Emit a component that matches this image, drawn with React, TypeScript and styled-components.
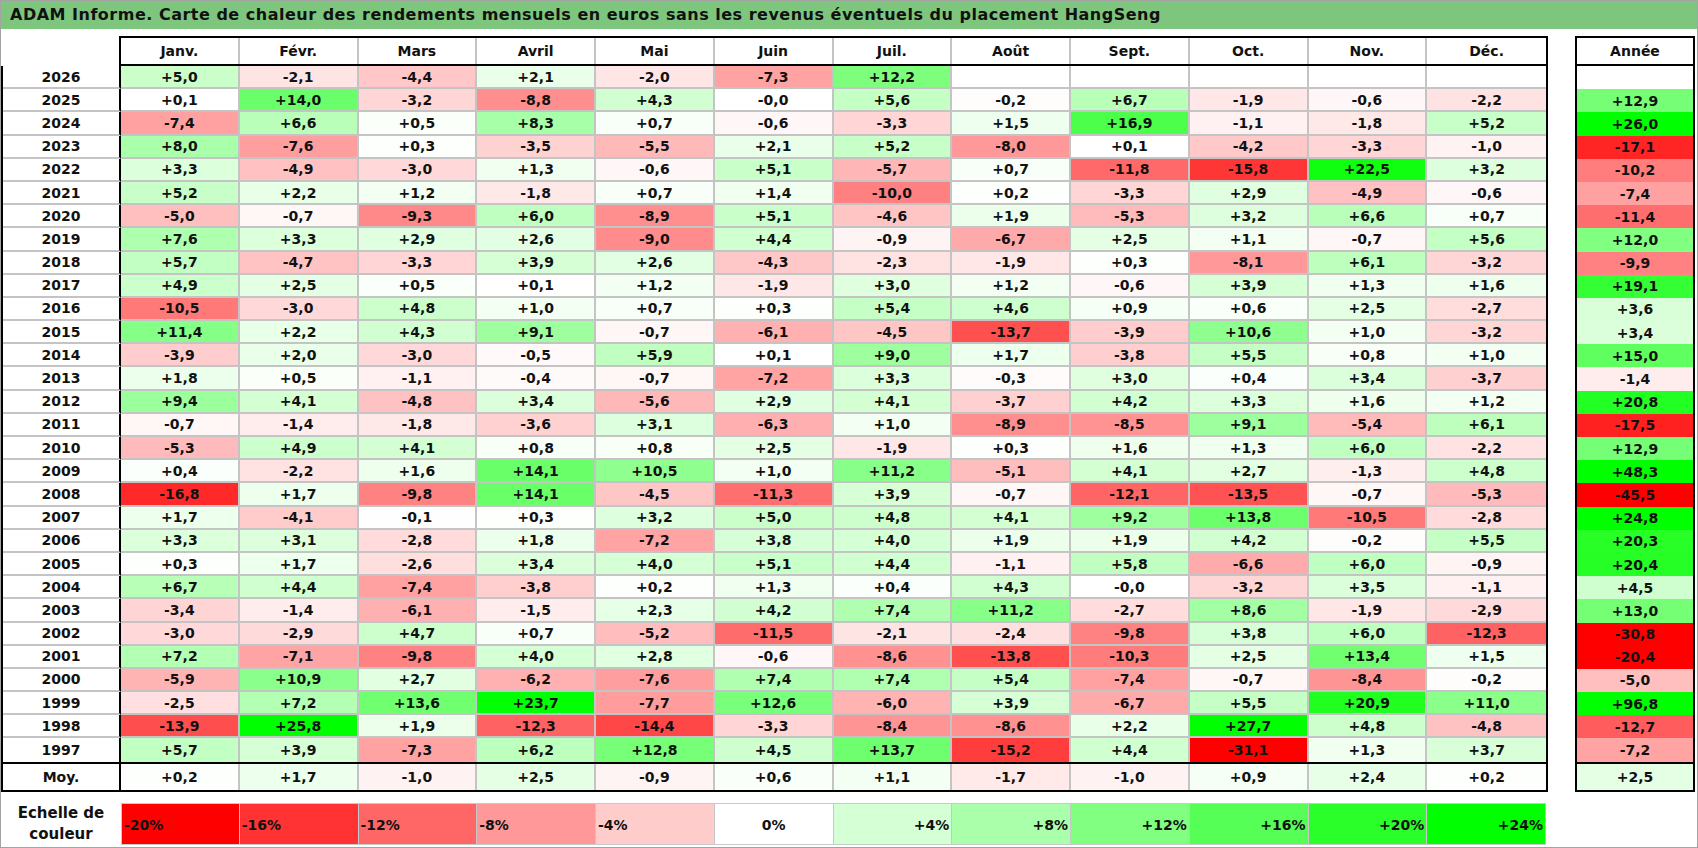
import React from 'react';
import styled, { createGlobalStyle } from 'styled-components';

const GlobalStyle = createGlobalStyle`
  body {
    margin: 0;
    background: #ffffff;
    font-family: "DejaVu Sans", "Liberation Sans", sans-serif;
  }
`;

const MONTHS = ['Janv.', 'Févr.', 'Mars', 'Avril', 'Mai', 'Juin', 'Juil.', 'Août', 'Sept.', 'Oct.', 'Nov.', 'Déc.'];

// year, 12 months, year total ('' = no value yet)
const ROWS: [string, string[], string][] = [
  ['2026', ['+5,0', '-2,1', '-4,4', '+2,1', '-2,0', '-7,3', '+12,2', '', '', '', '', ''], ''],
  ['2025', ['+0,1', '+14,0', '-3,2', '-8,8', '+4,3', '-0,0', '+5,6', '-0,2', '+6,7', '-1,9', '-0,6', '-2,2'], '+12,9'],
  ['2024', ['-7,4', '+6,6', '+0,5', '+8,3', '+0,7', '-0,6', '-3,3', '+1,5', '+16,9', '-1,1', '-1,8', '+5,2'], '+26,0'],
  ['2023', ['+8,0', '-7,6', '+0,3', '-3,5', '-5,5', '+2,1', '+5,2', '-8,0', '+0,1', '-4,2', '-3,3', '-1,0'], '-17,1'],
  ['2022', ['+3,3', '-4,9', '-3,0', '+1,3', '-0,6', '+5,1', '-5,7', '+0,7', '-11,8', '-15,8', '+22,5', '+3,2'], '-10,2'],
  ['2021', ['+5,2', '+2,2', '+1,2', '-1,8', '+0,7', '+1,4', '-10,0', '+0,2', '-3,3', '+2,9', '-4,9', '-0,6'], '-7,4'],
  ['2020', ['-5,0', '-0,7', '-9,3', '+6,0', '-8,9', '+5,1', '-4,6', '+1,9', '-5,3', '+3,2', '+6,6', '+0,7'], '-11,4'],
  ['2019', ['+7,6', '+3,3', '+2,9', '+2,6', '-9,0', '+4,4', '-0,9', '-6,7', '+2,5', '+1,1', '-0,7', '+5,6'], '+12,0'],
  ['2018', ['+5,7', '-4,7', '-3,3', '+3,9', '+2,6', '-4,3', '-2,3', '-1,9', '+0,3', '-8,1', '+6,1', '-3,2'], '-9,9'],
  ['2017', ['+4,9', '+2,5', '+0,5', '+0,1', '+1,2', '-1,9', '+3,0', '+1,2', '-0,6', '+3,9', '+1,3', '+1,6'], '+19,1'],
  ['2016', ['-10,5', '-3,0', '+4,8', '+1,0', '+0,7', '+0,3', '+5,4', '+4,6', '+0,9', '+0,6', '+2,5', '-2,7'], '+3,6'],
  ['2015', ['+11,4', '+2,2', '+4,3', '+9,1', '-0,7', '-6,1', '-4,5', '-13,7', '-3,9', '+10,6', '+1,0', '-3,2'], '+3,4'],
  ['2014', ['-3,9', '+2,0', '-3,0', '-0,5', '+5,9', '+0,1', '+9,0', '+1,7', '-3,8', '+5,5', '+0,8', '+1,0'], '+15,0'],
  ['2013', ['+1,8', '+0,5', '-1,1', '-0,4', '-0,7', '-7,2', '+3,3', '-0,3', '+3,0', '+0,4', '+3,4', '-3,7'], '-1,4'],
  ['2012', ['+9,4', '+4,1', '-4,8', '+3,4', '-5,6', '+2,9', '+4,1', '-3,7', '+4,2', '+3,3', '+1,6', '+1,2'], '+20,8'],
  ['2011', ['-0,7', '-1,4', '-1,8', '-3,6', '+3,1', '-6,3', '+1,0', '-8,9', '-8,5', '+9,1', '-5,4', '+6,1'], '-17,5'],
  ['2010', ['-5,3', '+4,9', '+4,1', '+0,8', '+0,8', '+2,5', '-1,9', '+0,3', '+1,6', '+1,3', '+6,0', '-2,2'], '+12,9'],
  ['2009', ['+0,4', '-2,2', '+1,6', '+14,1', '+10,5', '+1,0', '+11,2', '-5,1', '+4,1', '+2,7', '-1,3', '+4,8'], '+48,3'],
  ['2008', ['-16,8', '+1,7', '-9,8', '+14,1', '-4,5', '-11,3', '+3,9', '-0,7', '-12,1', '-13,5', '-0,7', '-5,3'], '-45,5'],
  ['2007', ['+1,7', '-4,1', '-0,1', '+0,3', '+3,2', '+5,0', '+4,8', '+4,1', '+9,2', '+13,8', '-10,5', '-2,8'], '+24,8'],
  ['2006', ['+3,3', '+3,1', '-2,8', '+1,8', '-7,2', '+3,8', '+4,0', '+1,9', '+1,9', '+4,2', '-0,2', '+5,5'], '+20,3'],
  ['2005', ['+0,3', '+1,7', '-2,6', '+3,4', '+4,0', '+5,1', '+4,4', '-1,1', '+5,8', '-6,6', '+6,0', '-0,9'], '+20,4'],
  ['2004', ['+6,7', '+4,4', '-7,4', '-3,8', '+0,2', '+1,3', '+0,4', '+4,3', '-0,0', '-3,2', '+3,5', '-1,1'], '+4,5'],
  ['2003', ['-3,4', '-1,4', '-6,1', '-1,5', '+2,3', '+4,2', '+7,4', '+11,2', '-2,7', '+8,6', '-1,9', '-2,9'], '+13,0'],
  ['2002', ['-3,0', '-2,9', '+4,7', '+0,7', '-5,2', '-11,5', '-2,1', '-2,4', '-9,8', '+3,8', '+6,0', '-12,3'], '-30,8'],
  ['2001', ['+7,2', '-7,1', '-9,8', '+4,0', '+2,8', '-0,6', '-8,6', '-13,8', '-10,3', '+2,5', '+13,4', '+1,5'], '-20,4'],
  ['2000', ['-5,9', '+10,9', '+2,7', '-6,2', '-7,6', '+7,4', '+7,4', '+5,4', '-7,4', '-0,7', '-8,4', '-0,2'], '-5,0'],
  ['1999', ['-2,5', '+7,2', '+13,6', '+23,7', '-7,7', '+12,6', '-6,0', '+3,9', '-6,7', '+5,5', '+20,9', '+11,0'], '+96,8'],
  ['1998', ['-13,9', '+25,8', '+1,9', '-12,3', '-14,4', '-3,3', '-8,4', '-8,6', '+2,2', '+27,7', '+4,8', '-4,8'], '-12,7'],
  ['1997', ['+5,7', '+3,9', '-7,3', '+6,2', '+12,8', '+4,5', '+13,7', '-15,2', '+4,4', '-31,1', '+1,3', '+3,7'], '-7,2'],
];

const AVERAGES = ['+0,2', '+1,7', '-1,0', '+2,5', '-0,9', '+0,6', '+1,1', '-1,7', '-1,0', '+0,9', '+2,4', '+0,2'];
const AVERAGE_YEAR = '+2,5';

const SCALE = [-20, -16, -12, -8, -4, 0, 4, 8, 12, 16, 20, 24];

// red saturates at -20 %, green at +24 %
function heat(text: string): string {
  if (!text) return '#ffffff';
  const v = parseFloat(text.replace(',', '.'));
  if (v >= 0) {
    const c = Math.round(255 * (1 - Math.min(v / 24, 1)));
    return `rgb(${c},255,${c})`;
  }
  const c = Math.round(255 * (1 - Math.min(-v / 20, 1)));
  return `rgb(255,${c},${c})`;
}

const Page = styled.div`
  width: 1698px;
  height: 848px;
  box-sizing: border-box;
  border: 1px solid #a3a3a3;
  background: #ffffff;
  overflow: hidden;
  color: #111111;
  font-weight: 700;
`;

const TitleBar = styled.div`
  height: 28px;
  background: #7ec67e;
  padding-left: 9px;
  font-size: 16px;
  letter-spacing: 0.5px;
  line-height: 28px;
  white-space: nowrap;
`;

const Tables = styled.div`
  display: flex;
  align-items: flex-start;
  gap: 27px;
  padding-top: 7px;
`;

const MainTable = styled.div`
  width: 1547px;
  display: flex;
  flex-direction: column;
`;

const HeaderRow = styled.div`
  display: flex;
  height: 30px;
`;

const Corner = styled.div`
  width: 118px;
  flex: none;
`;

const HeaderBand = styled.div`
  flex: 1;
  display: grid;
  grid-template-columns: repeat(12, 1fr);
  box-sizing: border-box;
  border: 2px solid #000;
`;

const HeadCell = styled.div`
  display: flex;
  align-items: center;
  justify-content: center;
  font-size: 14px;
  border-right: 2px solid #c4c4c4;

  &:last-child {
    border-right: none;
  }
`;

const Body = styled.div`
  box-sizing: border-box;
  border: 2px solid #000;
  border-top: none;
`;

const Row = styled.div<{ $avg?: boolean }>`
  display: grid;
  grid-template-columns: 118px repeat(12, 1fr);
  height: ${p => (p.$avg ? '28px' : '23.2px')};
  box-sizing: border-box;
  border-top: ${p => (p.$avg ? '2px solid #000' : 'none')};
`;

const YearCell = styled.div<{ $last?: boolean }>`
  display: flex;
  align-items: center;
  justify-content: center;
  box-sizing: border-box;
  font-size: 14px;
  border-right: 2px solid #000;
  border-bottom: ${p => (p.$last ? 'none' : '2px solid #c4c4c4')};
`;

const Cell = styled.div<{ $bg: string; $last?: boolean }>`
  display: flex;
  align-items: center;
  justify-content: center;
  box-sizing: border-box;
  background: ${p => p.$bg};
  font-size: 14px;
  border-right: 2px solid #c4c4c4;
  border-bottom: ${p => (p.$last ? 'none' : '2px solid #c4c4c4')};

  &:last-child {
    border-right: none;
  }
`;

const YearTable = styled.div`
  width: 120px;
  display: flex;
  flex-direction: column;
`;

const YearHead = styled.div`
  height: 30px;
  box-sizing: border-box;
  border: 2px solid #000;
  display: flex;
  align-items: center;
  justify-content: center;
  font-size: 14px;
`;

const TotalCell = styled.div<{ $bg: string; $avg?: boolean }>`
  height: ${p => (p.$avg ? '28px' : '23.2px')};
  box-sizing: border-box;
  background: ${p => p.$bg};
  border-top: ${p => (p.$avg ? '2px solid #000' : 'none')};
  display: flex;
  align-items: center;
  justify-content: center;
  font-size: 14px;
`;

const Legend = styled.div`
  display: grid;
  grid-template-columns: 120px repeat(12, 1fr);
  width: 1545px;
  height: 42px;
  margin-top: 11px;
`;

const LegendLabel = styled.div`
  display: flex;
  align-items: center;
  justify-content: center;
  text-align: center;
  font-size: 15px;
  line-height: 21px;
`;

const Swatch = styled.div<{ $bg: string; $align: string }>`
  display: flex;
  align-items: center;
  justify-content: ${p => p.$align};
  padding: 3px 2px 0;
  box-sizing: border-box;
  background: ${p => p.$bg};
  border: 1px solid #c8c8c8;
  border-left: none;
  font-size: 14px;

  &:nth-child(2) {
    border-left: 1px solid #c8c8c8;
  }
`;

function swatchText(v: number): string {
  if (v > 0) return `+${v}%`;
  return `${v}%`;
}

export default function App() {
  return (
    <>
      <GlobalStyle />
      <Page>
        <TitleBar>
          ADAM Informe. Carte de chaleur des rendements mensuels en euros sans les revenus éventuels du placement HangSeng
        </TitleBar>
        <Tables>
          <MainTable>
            <HeaderRow>
              <Corner />
              <HeaderBand>
                {MONTHS.map(m => (
                  <HeadCell key={m}>{m}</HeadCell>
                ))}
              </HeaderBand>
            </HeaderRow>
            <Body>
              {ROWS.map(([year, values], i) => {
                const last = i === ROWS.length - 1;
                return (
                  <Row key={year}>
                    <YearCell $last={last}>{year}</YearCell>
                    {values.map((v, j) => (
                      <Cell key={j} $bg={heat(v)} $last={last}>
                        {v}
                      </Cell>
                    ))}
                  </Row>
                );
              })}
              <Row $avg>
                <YearCell $last>Moy.</YearCell>
                {AVERAGES.map((v, j) => (
                  <Cell key={j} $bg={heat(v)} $last>
                    {v}
                  </Cell>
                ))}
              </Row>
            </Body>
          </MainTable>

          <YearTable>
            <YearHead>Année</YearHead>
            <Body>
              {ROWS.map(([year, , total]) => (
                <TotalCell key={year} $bg={heat(total)}>
                  {total}
                </TotalCell>
              ))}
              <TotalCell $avg $bg={heat(AVERAGE_YEAR)}>
                {AVERAGE_YEAR}
              </TotalCell>
            </Body>
          </YearTable>
        </Tables>

        <Legend>
          <LegendLabel>
            Echelle de
            <br />
            couleur
          </LegendLabel>
          {SCALE.map(v => (
            <Swatch
              key={v}
              $bg={heat(String(v))}
              $align={v < 0 ? 'flex-start' : v === 0 ? 'center' : 'flex-end'}
            >
              {swatchText(v)}
            </Swatch>
          ))}
        </Legend>
      </Page>
    </>
  );
}
